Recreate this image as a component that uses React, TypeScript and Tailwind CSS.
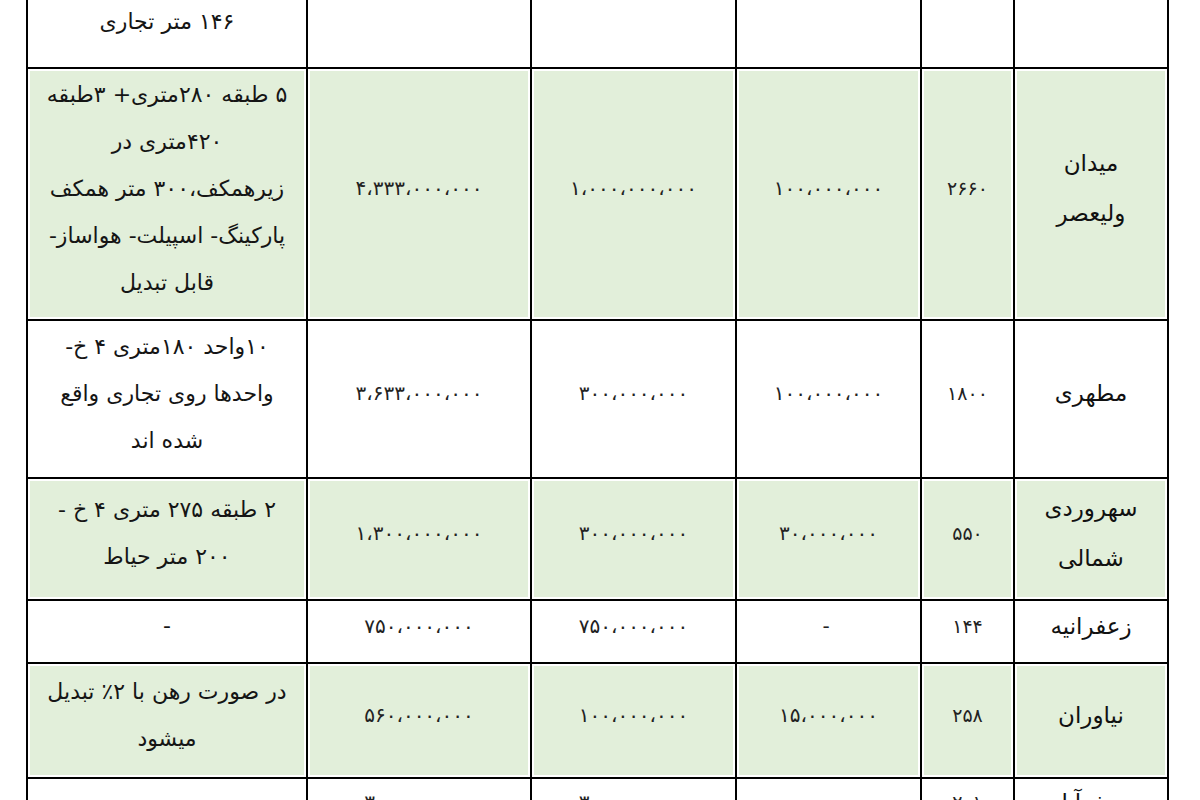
import React from 'react';

type Row = {
  name: string[];
  area: string;
  a: string;
  b: string;
  c: string;
  desc: string[];
  green: boolean;
  h: string;
};

const rows: Row[] = [
  {
    name: ['میدان', 'ولیعصر'],
    area: '۲۶۶۰',
    a: '۱۰۰،۰۰۰،۰۰۰',
    b: '۱،۰۰۰،۰۰۰،۰۰۰',
    c: '۴،۳۳۳،۰۰۰،۰۰۰',
    desc: ['۵ طبقه ۲۸۰متری+ ۳طبقه', '۴۲۰متری در', 'زیرهمکف،۳۰۰ متر همکف', 'پارکینگ- اسپیلت- هواساز-', 'قابل تبدیل'],
    green: true,
    h: 'h-[252px]',
  },
  {
    name: ['مطهری'],
    area: '۱۸۰۰',
    a: '۱۰۰،۰۰۰،۰۰۰',
    b: '۳۰۰،۰۰۰،۰۰۰',
    c: '۳،۶۳۳،۰۰۰،۰۰۰',
    desc: ['۱۰واحد ۱۸۰متری ۴ خ-', 'واحدها روی تجاری واقع', 'شده اند'],
    green: false,
    h: 'h-[158px]',
  },
  {
    name: ['سهروردی', 'شمالی'],
    area: '۵۵۰',
    a: '۳۰،۰۰۰،۰۰۰',
    b: '۳۰۰،۰۰۰،۰۰۰',
    c: '۱،۳۰۰،۰۰۰،۰۰۰',
    desc: ['۲ طبقه ۲۷۵ متری ۴ خ -', '۲۰۰ متر حیاط'],
    green: true,
    h: 'h-[122px]',
  },
  {
    name: ['زعفرانیه'],
    area: '۱۴۴',
    a: '-',
    b: '۷۵۰،۰۰۰،۰۰۰',
    c: '۷۵۰،۰۰۰،۰۰۰',
    desc: ['-'],
    green: false,
    h: 'h-[63px]',
  },
  {
    name: ['نیاوران'],
    area: '۲۵۸',
    a: '۱۵،۰۰۰،۰۰۰',
    b: '۱۰۰،۰۰۰،۰۰۰',
    c: '۵۶۰،۰۰۰،۰۰۰',
    desc: ['در صورت رهن با ۲٪ تبدیل', 'میشود'],
    green: true,
    h: 'h-[115px]',
  },
  {
    name: ['جعفرآباد'],
    area: '۲۰۱',
    a: '-',
    b: '۳۰۰،۰۰۰،۰۰۰',
    c: '۳۰۰،۰۰۰،۰۰۰',
    desc: ['-'],
    green: false,
    h: 'h-[60px]',
  },
];

const cell = 'border-2 border-black text-center align-middle px-1 pb-3 leading-[30px]';
const num = 'text-[20px] tracking-[5px] text-[#222]';

export default function App() {
  return (
    <div className="w-[1200px] h-[800px] overflow-hidden bg-white font-['DejaVu_Sans',sans-serif]">
      <table dir="rtl" className="ml-[26px] -mt-[3px] w-[1141px] table-fixed border-collapse text-[#151515]">
        <colgroup>
          <col className="w-[154px]" />
          <col className="w-[93px]" />
          <col className="w-[185px]" />
          <col className="w-[205px]" />
          <col className="w-[224px]" />
          <col className="w-[280px]" />
        </colgroup>
        <tbody>
          {/* row cut off by the top of the page */}
          <tr className="h-[66px]">
            <td className={cell} />
            <td className={cell} />
            <td className={cell} />
            <td className={cell} />
            <td className={cell} />
            <td className="border-2 border-black text-center align-bottom px-1 pb-[22px] text-[22px] leading-[46px]">
              ۱۴۶ متر تجاری
            </td>
          </tr>
          {rows.map((r, i) => {
            const bg = r.green ? 'bg-[#e2efda] shadow-[inset_0_0_0_2px_#fff]' : 'bg-white';
            const lead = r.name.length > 1 ? 'leading-[50px]' : 'leading-[30px]';
            const dlead = r.desc.length > 1 ? 'leading-[47px]' : 'leading-[30px]';
            return (
              <tr key={i} className={r.h}>
                <td className={`${cell} ${bg} ${lead} text-[23px] text-[#111]`}>
                  {r.name.map((n, j) => (
                    <div key={j}>{n}</div>
                  ))}
                </td>
                <td className={`${cell} ${bg} text-[19px] tracking-[4px] text-[#222]`}>{r.area}</td>
                <td className={`${cell} ${bg} ${num}`}>{r.a}</td>
                <td className={`${cell} ${bg} ${num}`}>{r.b}</td>
                <td className={`${cell} ${bg} ${num}`}>{r.c}</td>
                <td className={`${cell} ${bg} ${dlead} text-[22px]`}>
                  {r.desc.map((d, j) => (
                    <div key={j}>{d}</div>
                  ))}
                </td>
              </tr>
            );
          })}
        </tbody>
      </table>
    </div>
  );
}
